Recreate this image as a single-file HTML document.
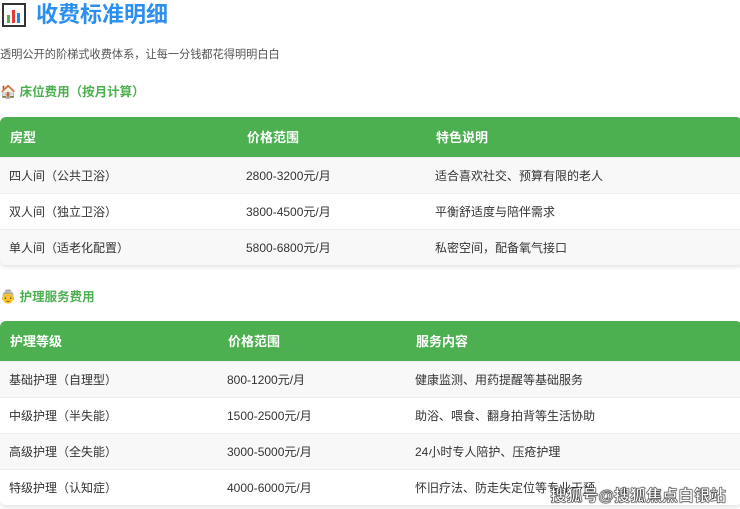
<!DOCTYPE html>
<html><head><meta charset="utf-8"><style>
*{margin:0;padding:0;box-sizing:border-box}
body{width:740px;height:509px;overflow:hidden;background:#fff;font-family:"Liberation Sans","Noto Sans CJK SC",sans-serif;color:#333;position:relative}
.a{position:absolute}
h1{position:absolute;left:36px;top:1px;font-size:22px;line-height:28px;color:#2b8ff0;font-weight:bold}
.sub{left:0;top:46px;font-size:11.2px;color:#555;line-height:18px}
.h2{font-size:12.5px;font-weight:bold;color:#4caf50;line-height:20px}
table{position:absolute;left:0;width:742px;border-collapse:collapse;border-radius:6px;overflow:hidden;box-shadow:0 2px 5px rgba(0,0,0,.12);font-size:12px}
th{background:#4caf50;color:#fff;text-align:left;font-weight:bold;font-size:13px;height:40px;padding-left:10px}
td{height:36px;padding-left:9px;border-top:1px solid #eee}
tr:nth-child(odd) td{background:#f8f8f8}
tr:nth-child(even) td{background:#fff}
.wm{right:14px;top:482px;font-size:16px;color:#fff;font-weight:bold;-webkit-text-stroke:0.4px #222;text-shadow:0 0 1.5px #000}
</style></head><body>
<svg class="a" style="left:2px;top:3px" width="24" height="24" viewBox="0 0 24 24"><rect x="1" y="1" width="22" height="22" fill="#fff" stroke="#333" stroke-width="2"/><rect x="5" y="12" width="3" height="8" fill="#4caf50"/><rect x="10" y="7" width="3" height="13" fill="#e53935"/><rect x="15" y="10" width="3" height="10" fill="#1e88e5"/></svg>
<h1>收费标准明细</h1>
<div class="a sub">透明公开的阶梯式收费体系，让每一分钱都花得明明白白</div>
<div class="a h2" style="left:0;top:82px"><span style="font-size:13px">🏠</span> 床位费用（按月计算）</div>
<table style="top:117px"><colgroup><col style="width:237px"><col style="width:189px"><col></colgroup>
<thead><tr><th>房型</th><th>价格范围</th><th>特色说明</th></tr></thead>
<tbody><tr><td>四人间（公共卫浴）</td><td>2800-3200元/月</td><td>适合喜欢社交、预算有限的老人</td></tr>
<tr><td>双人间（独立卫浴）</td><td>3800-4500元/月</td><td>平衡舒适度与陪伴需求</td></tr>
<tr><td>单人间（适老化配置）</td><td>5800-6800元/月</td><td>私密空间，配备氧气接口</td></tr></tbody></table>
<div class="a h2" style="left:0;top:287px"><span style="font-size:13px">👵</span> 护理服务费用</div>
<table style="top:321px"><colgroup><col style="width:218px"><col style="width:188px"><col></colgroup>
<thead><tr><th>护理等级</th><th>价格范围</th><th>服务内容</th></tr></thead>
<tbody><tr><td>基础护理（自理型）</td><td>800-1200元/月</td><td>健康监测、用药提醒等基础服务</td></tr>
<tr><td>中级护理（半失能）</td><td>1500-2500元/月</td><td>助浴、喂食、翻身拍背等生活协助</td></tr>
<tr><td>高级护理（全失能）</td><td>3000-5000元/月</td><td>24小时专人陪护、压疮护理</td></tr>
<tr><td>特级护理（认知症）</td><td>4000-6000元/月</td><td>怀旧疗法、防走失定位等专业干预</td></tr></tbody></table>
<div class="a wm">搜狐号@搜狐焦点白银站</div>
</body></html>
